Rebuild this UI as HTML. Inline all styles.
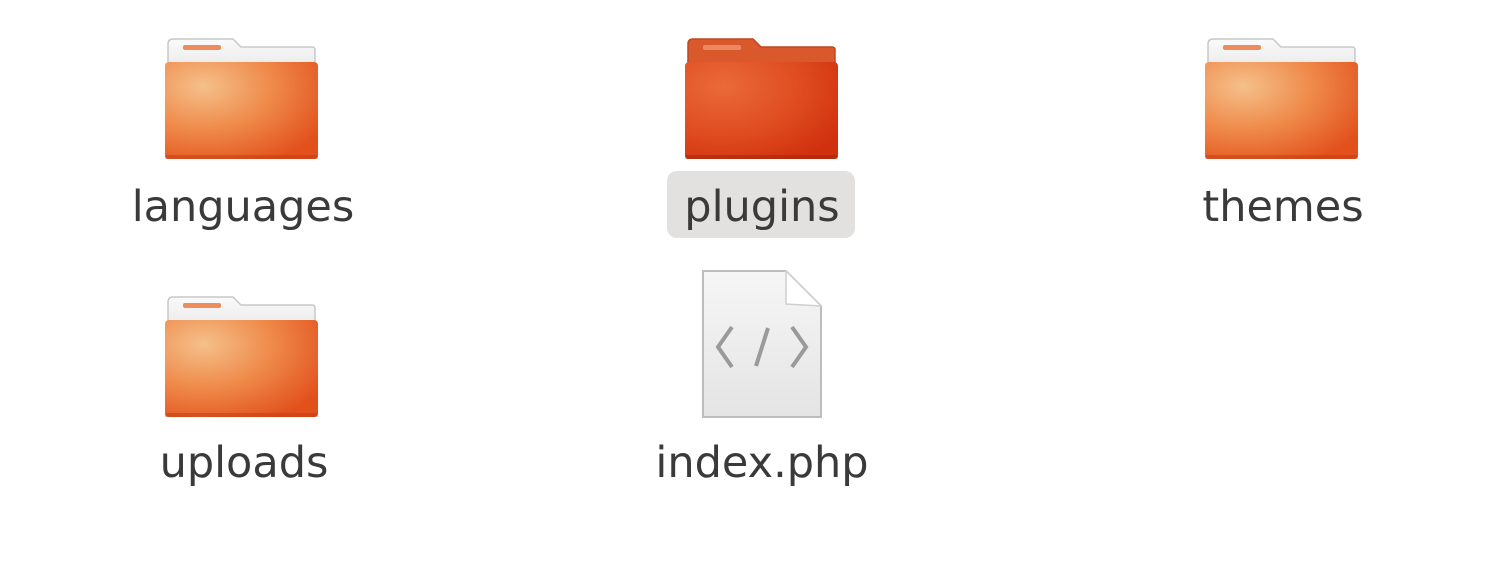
<!DOCTYPE html>
<html><head><meta charset="utf-8"><style>
body{margin:0;width:1500px;height:578px;background:#fff;position:relative;overflow:hidden;font-family:"DejaVu Sans","Liberation Sans",sans-serif;}
.t{position:absolute;font-size:43px;line-height:43px;color:#3a3a3a;text-align:center;width:400px;white-space:nowrap}
.sel{position:absolute;left:667px;top:171px;width:188px;height:67px;border-radius:10px;background:#e2e1df}
svg{position:absolute;left:0;top:0}
</style></head><body>
<div class="sel"></div>
<svg width="1500" height="578" viewBox="0 0 1500 578">
<defs>
<radialGradient id="or" cx="0.25" cy="0.25" r="0.9">
<stop offset="0" stop-color="#f5c08a"/><stop offset="0.5" stop-color="#ef8a4a"/><stop offset="1" stop-color="#e2501c"/></radialGradient>
<radialGradient id="rd" cx="0.25" cy="0.25" r="0.9">
<stop offset="0" stop-color="#ea6a3a"/><stop offset="0.6" stop-color="#de4a1e"/><stop offset="1" stop-color="#d0300e"/></radialGradient>
<linearGradient id="wb" x1="0" y1="0" x2="0" y2="1"><stop offset="0" stop-color="#fafafa"/><stop offset="1" stop-color="#e6e6e6"/></linearGradient>
<linearGradient id="pb" x1="0" y1="0" x2="0" y2="1"><stop offset="0" stop-color="#f6f6f6"/><stop offset="1" stop-color="#e4e4e4"/></linearGradient>
<g id="fw">
<path d="M3 8 Q3 3 8 3 L68 3 L76 11 L147 11 Q150 11 150 14 L150 40 L3 40 Z" fill="url(#wb)" stroke="#c8c8c8" stroke-width="1.5"/>
<rect x="18" y="9" width="38" height="5" rx="2" fill="#ef8d5a"/>
<rect x="0" y="26" width="153" height="97" rx="4" fill="url(#or)"/>
<rect x="0" y="119" width="153" height="4" rx="2" fill="#c23a10" opacity="0.5"/>
</g>
<g id="fr">
<path d="M3 8 Q3 3 8 3 L68 3 L76 11 L147 11 Q150 11 150 14 L150 40 L3 40 Z" fill="#d9582c" stroke="#bf4620" stroke-width="1.5"/>
<rect x="18" y="9" width="38" height="5" rx="2" fill="#e98a62"/>
<rect x="0" y="26" width="153" height="97" rx="4" fill="url(#rd)"/>
<rect x="0" y="119" width="153" height="4" rx="2" fill="#9a2508" opacity="0.5"/>
</g>
</defs>
<use href="#fw" x="165" y="36"/>
<use href="#fr" x="685" y="36"/>
<use href="#fw" x="1205" y="36"/>
<use href="#fw" x="165" y="294"/>
<path d="M703 271 L786 271 L821 306 L821 417 L703 417 Z" fill="url(#pb)" stroke="#bdbdbd" stroke-width="2"/>
<path d="M786 271 L786 304 L821 306 Z" fill="#fff" stroke="#cfcfcf" stroke-width="1.5"/>
<g fill="none" stroke="#9a9a9a" stroke-width="4">
<path d="M732 327 L718 347 L732 367"/>
<path d="M768 328 L756 366"/>
<path d="M792 327 L806 347 L792 367"/>
</g>
</svg>
<div class="t" style="left:43px;top:186px">languages</div>
<div class="t" style="left:562px;top:186px">plugins</div>
<div class="t" style="left:1083px;top:186px">themes</div>
<div class="t" style="left:44px;top:442px">uploads</div>
<div class="t" style="left:562px;top:442px">index.php</div>
</body></html>
